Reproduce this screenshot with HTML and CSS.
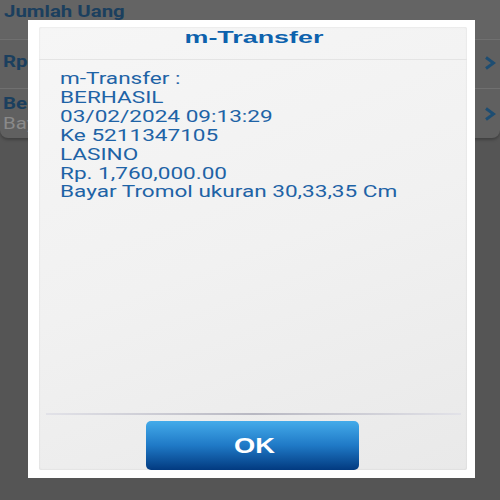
FILE: index.html
```html
<!DOCTYPE html>
<html>
<head>
<meta charset="utf-8">
<link rel="stylesheet" href="styles.css">
</head>
<body>
<div class="page">
  <div class="header"><span class="wide">Jumlah Uang</span></div>
  <div class="card">
    <div class="row row-one">
      <div class="row-text"><div class="row-title"><span class="wide">Rp</span></div></div>
      <svg class="chev" width="12" height="14" viewBox="0 0 12 14"><polyline points="2,1.5 9.5,7 2,12.5" fill="none" stroke="#1d4d72" stroke-width="3"/></svg>
    </div>
    <div class="row row-two">
      <div class="row-text">
        <div class="row-title"><span class="wide">Be</span></div>
        <div class="row-sub"><span class="wide">Bay</span></div>
      </div>
      <svg class="chev" width="12" height="14" viewBox="0 0 12 14"><polyline points="2,1.5 9.5,7 2,12.5" fill="none" stroke="#1d4d72" stroke-width="3"/></svg>
    </div>
  </div>
</div>
<div class="overlay">
  <div class="dialog">
    <div class="panel">
      <div class="title"><span class="title-text">m-Transfer</span></div>
      <div class="message">
        <div class="lines">
          <div>m-Transfer :</div>
          <div>BERHASIL</div>
          <div>03/02/2024 09:13:29</div>
          <div>Ke 5211347105</div>
          <div>LASINO</div>
          <div>Rp. 1,760,000.00</div>
          <div>Bayar Tromol ukuran 30,33,35 Cm</div>
        </div>
      </div>
      <div class="actions">
        <div class="sep"></div>
        <button class="ok"><span class="ok-text">OK</span></button>
      </div>
    </div>
  </div>
</div>
</body>
</html>
```
FILE: styles.css
```css
html, body {
  margin: 0;
  padding: 0;
  width: 500px;
  height: 500px;
  overflow: hidden;
  background: #555555;
  font-family: Roboto, "Noto Sans", "Liberation Sans", sans-serif;
}
.page {
  width: 500px;
  height: 500px;
  background: #555555;
}
.wide {
  display: inline-block;
  transform: scaleX(1.2);
  transform-origin: left center;
}
.header {
  height: 39px;
  background: #646464;
  color: #1b3f5e;
  font-weight: bold;
  font-size: 17px;
  padding-left: 4px;
  box-sizing: border-box;
  line-height: 22px;
}
.card {
  background: #606060;
  border-radius: 0 0 8px 8px;
  box-shadow: 0 2px 3px rgba(0,0,0,0.25);
}
.row {
  display: flex;
  align-items: center;
  justify-content: space-between;
  border-top: 1px solid #707070;
  padding: 0 4px 0 3px;
  box-sizing: border-box;
}
.row-one { height: 49px; padding-bottom: 6px; }
.row-two { height: 50px; padding-bottom: 2px; }
.row-one .chev { margin-top: 4px; }
.row-two .chev { margin-top: 2px; }
.row-text {
  white-space: nowrap;
}
.row-title {
  color: #1b3f5e;
  font-weight: bold;
  font-size: 17px;
  line-height: 20px;
}
.row-sub {
  color: #8a8a8a;
  font-size: 17px;
  line-height: 20px;
}
.chev {
  display: block;
}
.overlay {
  position: absolute;
  left: 28px;
  top: 20px;
}
.dialog {
  width: 447px;
  height: 458px;
  background: #ffffff;
  padding: 7px 8px 8px 11px;
  box-sizing: border-box;
}
.panel {
  height: 100%;
  background: linear-gradient(160deg, #f6f6f6 0%, #f1f1f1 50%, #e9e9e9 100%);
  box-shadow: inset 0 0 2px rgba(0,0,0,0.12);
  border-radius: 2px;
  display: flex;
  flex-direction: column;
  overflow: hidden;
}
.title {
  height: 32px;
  border-bottom: 1px solid #e4e4e4;
  text-align: center;
  color: #0d62ad;
  font-family: "Liberation Sans", Arial, sans-serif;
  font-weight: bold;
  font-size: 17px;
  line-height: 21px;
  padding-left: 2px;
}
.title-text {
  display: inline-block;
  transform: scaleX(1.58);
  transform-origin: center center;
}
.message {
  flex: 1;
  padding: 10px 0 0 21px;
  color: #1e63a6;
  font-size: 16px;
  line-height: 18.9px;
}
.lines {
  width: max-content;
  transform: scaleX(1.41);
  transform-origin: left top;
}
.actions {
  display: flex;
  flex-direction: column;
  align-items: center;
}
.sep {
  width: 415px;
  height: 2px;
  margin-left: 1px;
  background: linear-gradient(90deg, #e2e2e8 0%, #b8b8c2 50%, #e2e2e8 100%);
  margin-bottom: 6px;
}
.ok {
  width: 213px;
  height: 49px;
  margin-right: 1px;
  border: none;
  border-radius: 5px;
  background: linear-gradient(180deg, #44abea 0%, #1f79c6 50%, #023a80 100%);
  color: #ffffff;
  font-family: "Liberation Sans", Arial, sans-serif;
  font-weight: bold;
  font-size: 22px;
  padding: 0 0 0 4px;
}
.ok-text {
  display: inline-block;
  transform: scaleX(1.24);
}
```
